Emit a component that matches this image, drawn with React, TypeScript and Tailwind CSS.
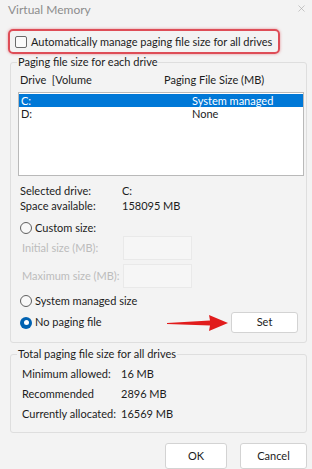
import { X } from "lucide-react"

const drives = [
  { id: "C:", size: "System managed", selected: true },
  { id: "D:", size: "None", selected: false },
]

const totals = [
  { label: "Minimum allowed:", value: "16 MB" },
  { label: "Recommended", value: "2896 MB" },
  { label: "Currently allocated:", value: "16569 MB" },
]

function Radio({ checked }: { checked?: boolean }) {
  return checked ? (
    <span className="w-[12px] h-[12px] rounded-full bg-[#0062b1] flex items-center justify-center shrink-0">
      <span className="w-[5px] h-[5px] rounded-full bg-white" />
    </span>
  ) : (
    <span className="w-[12px] h-[12px] rounded-full border border-[#5f5f5f] bg-[#f8f8f8] shrink-0" />
  )
}

export default function App() {
  return (
    <div
      className="relative w-[312px] h-[469px] overflow-hidden bg-[#f3f3f3] text-[11px] text-[#1c1c1c] whitespace-nowrap"
      style={{ fontFamily: 'Lato, "Noto Sans", sans-serif' }}
    >
      {/* Title bar */}
      <div className="h-[24px] flex items-center justify-between pl-[8px] pr-[5px]">
        <span className="text-[12px] text-[#8d8d8d] leading-none -mt-[5px]">Virtual Memory</span>
        <X className="w-[11px] h-[11px] text-[#a5a5a5] -mt-[8px]" strokeWidth={1.3} />
      </div>

      {/* Auto-manage checkbox with red annotation */}
      <div className="mt-[5px] ml-[8px] w-[272px] h-[25px] rounded-[5px] border-2 border-[#de4d57] shadow-[0_0_3px_rgba(222,77,87,0.6)] flex items-center pl-[5px] gap-[4px]">
        <span className="w-[12px] h-[12px] shrink-0 rounded-[2px] border border-[#6a6a6a] bg-[#fafafa]" />
        <span className="leading-none">Automatically manage paging file size for all drives</span>
      </div>

      {/* Per-drive group */}
      <fieldset className="ml-[10px] w-[297px] border border-[#dedede] rounded-[3px] pl-[7px] pr-[2px] pb-[9px]">
        <legend className="-ml-[1px] px-[1px] leading-[16px]">Paging file size for each drive</legend>
        <div className="mt-[2px] h-[16px] flex items-center">
          <span className="pl-[2px] w-[146px]">Drive&nbsp; [Volume</span>
          <span>Paging File Size (MB)</span>
        </div>
        <div className="mt-[4px] h-[84px] bg-white border border-[#b9b9b9] pt-[1px]">
          {drives.map((d) => (
            <div
              key={d.id}
              className={`h-[13px] flex items-center leading-[13px] ${d.selected ? "bg-[#0078d7] text-white" : ""}`}
            >
              <span className="pl-[2px] w-[173px]">{d.id}</span>
              <span>{d.size}</span>
            </div>
          ))}
        </div>

        <div className="mt-[7px] leading-[15px]">
          <div className="flex">
            <span className="pl-[2px] w-[104px]">Selected drive:</span>
            <span>C:</span>
          </div>
          <div className="flex">
            <span className="pl-[2px] w-[104px]">Space available:</span>
            <span>158095 MB</span>
          </div>
        </div>

        <div className="mt-[7px] h-[16px] flex items-center gap-[3px] pl-[2px]">
          <Radio />
          <span>Custom size:</span>
        </div>
        <div className="h-[24px] flex items-center">
          <span className="pl-[4px] w-[105px] text-[#bcbcbc]">Initial size (MB):</span>
          <span className="w-[69px] h-[24px] border border-[#e9e9e9] bg-[#f6f6f6]" />
        </div>
        <div className="mt-[4px] h-[24px] flex items-center">
          <span className="pl-[4px] w-[105px] text-[#bcbcbc]">Maximum size (MB):</span>
          <span className="w-[69px] h-[24px] border border-[#e9e9e9] bg-[#f6f6f6]" />
        </div>
        <div className="mt-[5px] h-[16px] flex items-center gap-[3px] pl-[2px]">
          <Radio />
          <span>System managed size</span>
        </div>
        <div className="mt-[3px] h-[21px] flex items-center pl-[2px]">
          <Radio checked />
          <span className="ml-[3px]">No paging file</span>
          <button className="ml-auto mr-[6px] w-[67px] h-[21px] bg-white border border-[#d3d3d3] rounded-[3px]">
            Set
          </button>
        </div>
      </fieldset>

      {/* Totals group */}
      <fieldset className="mt-[3px] ml-[10px] w-[297px] border border-[#dedede] rounded-[3px] pl-[11px] pb-[8px]">
        <legend className="-ml-[5px] px-[1px] leading-[16px]">Total paging file size for all drives</legend>
        <div className="mt-[2px] leading-[20px]">
          {totals.map((t) => (
            <div key={t.label} className="flex">
              <span className="w-[99px]">{t.label}</span>
              <span>{t.value}</span>
            </div>
          ))}
        </div>
      </fieldset>

      {/* Dialog buttons */}
      <div className="mt-[10px] flex justify-end gap-[13px] pr-[5px]">
        <button className="w-[62px] h-[26px] bg-white border border-[#d3d3d3] rounded-[3px]">OK</button>
        <button className="w-[67px] h-[26px] bg-white border border-[#d3d3d3] rounded-[3px]">Cancel</button>
      </div>

      {/* Red annotation arrow pointing at Set */}
      <svg className="absolute left-[167px] top-[314px]" width="62" height="18" viewBox="0 0 62 18">
        <polygon points="0,9 43,6.5 42,1 61,9 42,17 43,11.5 0,10" fill="#e11c1c" />
      </svg>
    </div>
  )
}
